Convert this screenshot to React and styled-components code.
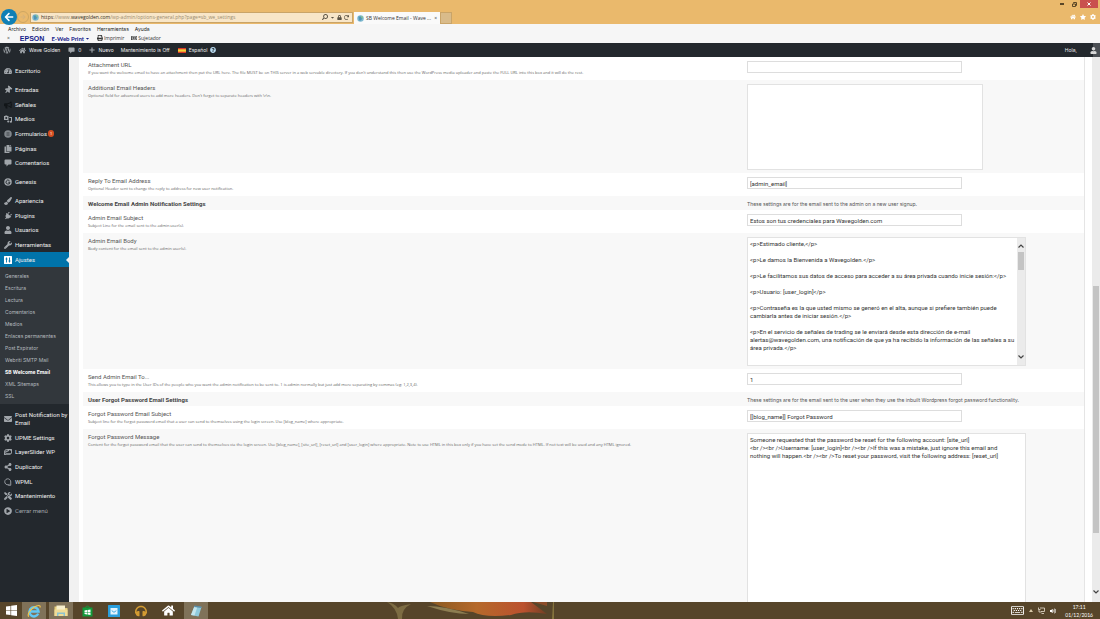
import React from "react";
import styled, { createGlobalStyle } from "styled-components";
import {
  FaWordpress,
  FaHome,
  FaPlus,
  FaThumbtack,
  FaBullhorn,
  FaCopy,
  FaPaintBrush,
  FaPlug,
  FaUser,
  FaWrench,
  FaEnvelope,
  FaCog,
  FaImages,
  FaShareAlt,
  FaTools,
  FaSearch,
  FaLock,
  FaRedo,
  FaStar,
  FaHeadphones,
  FaPrint,
  FaQuestionCircle,
  FaArrowLeft,
  FaArrowRight,
  FaTachometerAlt,
  FaPlayCircle,
  FaVolumeUp,
  FaRegKeyboard,
  FaRegNewspaper,
  FaCaretDown,
} from "react-icons/fa";

const GlobalStyle = createGlobalStyle`
  * {
    box-sizing: border-box;
  }
  body {
    margin: 0;
    font-family: Roboto, "Open Sans", sans-serif;
    background: #f1f1f1;
  }
  button {
    border: 0;
    padding: 0;
    background: none;
    font: inherit;
    color: inherit;
  }
  a {
    color: inherit;
    text-decoration: none;
  }
  svg {
    flex: none;
    display: block;
  }
`;

const Screen = styled.div`
  display: flex;
  flex-direction: column;
  height: 100vh;
  overflow: hidden;
`;

/* browser */
const Chrome = styled.header`
  flex: none;
  background: #eab96c;
`;

const TitleBar = styled.div`
  display: flex;
  justify-content: flex-end;
  align-items: flex-start;
  height: 10px;
  padding-right: 2px;
`;

const WindowButton = styled.button`
  display: flex;
  align-items: center;
  justify-content: center;
  width: ${(props) => (props.$close ? "18px" : "12px")};
  height: 8px;
  color: ${(props) => (props.$close ? "#fff" : "#5b4727")};
  background: ${(props) => (props.$close ? "#c9504e" : "transparent")};
`;

const NavRow = styled.div`
  display: flex;
  align-items: center;
  height: 14px;
  padding: 0 4px 0 1px;
`;

const RoundButton = styled.button`
  display: flex;
  align-items: center;
  justify-content: center;
  width: ${(props) => (props.$big ? "16px" : "12px")};
  height: ${(props) => (props.$big ? "16px" : "12px")};
  border-radius: 50%;
  border: ${(props) => (props.$big ? "0" : "1px solid #cfa762")};
  color: ${(props) => (props.$big ? "#fff" : "#d6b27a")};
  background: ${(props) => (props.$big ? "#0f7fb5" : "transparent")};
`;

const AddressBar = styled.div`
  display: flex;
  align-items: center;
  gap: 2px;
  flex: 0 0 323px;
  height: 11px;
  margin: 0 1px;
  padding: 0 3px 0 1px;
  border: 1px solid #c9a468;
  background: #f8e6c8;
  color: #5b5344;
`;

const Address = styled.div`
  flex: 1;
  font-family: "Open Sans", sans-serif;
  font-size: 5px;
  line-height: 8px;
  color: #9a8b70;
  b {
    color: #2e2a22;
    font-weight: 400;
  }
`;

const Tab = styled.button`
  display: flex;
  align-items: center;
  align-self: flex-end;
  gap: 2px;
  width: 86px;
  height: 12px;
  padding: 0 3px;
  background: #fafafa;
  font-family: "Open Sans", sans-serif;
  font-size: 5px;
  color: #333;
  span {
    flex: 1;
    text-align: left;
  }
`;

const NewTab = styled.button`
  align-self: flex-end;
  width: 12px;
  height: 12px;
  border: 1px solid #c9a468;
  background: #d9bb8a;
`;

const NavIcons = styled.div`
  display: flex;
  gap: 4px;
  margin-left: auto;
  color: #fff;
`;

const MenuBar = styled.nav`
  display: flex;
  align-items: center;
  gap: 6px;
  height: 9px;
  padding-left: 8px;
  background: #f6f6f6;
  font-family: Inter, sans-serif;
  font-size: 5px;
  color: #222;
`;

const ToolBar = styled.div`
  display: flex;
  align-items: center;
  gap: 7px;
  height: 10px;
  padding-left: 7px;
  background: #f6f6f6;
  font-family: "Open Sans", sans-serif;
  font-size: 5px;
  color: #333;
  button {
    display: flex;
    align-items: center;
    gap: 1px;
  }
`;

const Brand = styled.span`
  padding-left: 3px;
  font-family: "Liberation Sans", sans-serif;
  font-size: 7px;
  font-weight: 700;
  color: #14208a;
`;

const WebPrint = styled.button`
  font-family: Lato, sans-serif;
  font-size: 6px;
  font-weight: 700;
  color: #14208a;
`;

/* admin */
const AdminBar = styled.nav`
  display: flex;
  align-items: center;
  flex: none;
  height: 14px;
  padding: 0 0 0 3px;
  background: #23282d;
  font-family: Inter, sans-serif;
  font-size: 5px;
  color: #eee;
`;

const AdminLink = styled.a`
  display: flex;
  align-items: center;
  gap: 3px;
  margin-right: ${(props) => props.$gap || "8px"};
  svg {
    color: #a0a5aa;
  }
`;

const Avatar = styled.button`
  display: flex;
  align-items: center;
  justify-content: center;
  width: 14px;
  height: 14px;
  background: linear-gradient(to right, #23282d 50%, #4b4f54 50%);
  color: #d8d8d8;
`;

const Body = styled.div`
  display: flex;
  flex: 1;
  min-height: 0;
`;

const SideMenu = styled.nav`
  flex: 0 0 69px;
  padding-top: 6px;
  background: #23282d;
  overflow: hidden;
`;

const MenuGroup = styled.div`
  margin-bottom: ${(props) => (props.$open ? "0" : "4px")};
`;

const MenuItem = styled.a`
  display: flex;
  align-items: center;
  gap: 3px;
  height: ${(props) => (props.$tall ? "22px" : "15px")};
  padding-left: 4px;
  white-space: nowrap;
  font-size: 6px;
  line-height: 8px;
  color: ${(props) => (props.$muted ? "#a0a5aa" : "#eee")};
  background: ${(props) => (props.$active ? "#0073aa" : "transparent")};
  svg {
    width: 8px;
    height: 8px;
    color: ${(props) => (props.$active ? "#fff" : "#a0a5aa")};
  }
  &:nth-child(3n) {
    height: 14px;
  }
  &::after {
    content: "";
    display: ${(props) => (props.$active ? "block" : "none")};
    margin-left: auto;
    border: 3px solid transparent;
    border-right-color: #f1f1f1;
  }
`;

const Count = styled.span`
  width: 6px;
  height: 7px;
  margin-left: -2px;
  border-radius: 4px;
  background: #d54e21;
  color: #fff;
  font-size: 4px;
  line-height: 7px;
  text-align: center;
`;

const SubMenu = styled.div`
  display: flex;
  flex-direction: column;
  margin-bottom: 4px;
  padding: 3px 0 2px;
  background: #32373c;
`;

const SubItem = styled.a`
  padding-left: 5px;
  font-family: Inter, sans-serif;
  font-size: 5px;
  line-height: 12px;
  font-weight: ${(props) => (props.$current ? 700 : 400)};
  color: ${(props) => (props.$current ? "#fff" : "#b4b9be")};
`;

const Panel = styled.main`
  flex: 1;
  min-width: 0;
  padding: 0 7px 0 4px;
  margin-left: 10px;
  background: #fff;
`;

const SettingsForm = styled.form`
  height: 100%;
  overflow: hidden;
  border-right: 1px solid #e5e5e5;
`;

const Row = styled.div`
  display: grid;
  grid-template-columns: 659fr 342fr;
  padding: ${(props) => (props.$slim ? "4px 0 2px" : "4px 0 3px")};
  background: #fff;
  &:nth-child(even) {
    background: #f8f8f8;
  }
`;

const Info = styled.div`
  padding-left: 5px;
  color: #555;
`;

const Label = styled.label`
  display: block;
  font-size: 6px;
  line-height: 8px;
`;

const Hint = styled.p`
  margin: 0;
  font-family: "Open Sans", sans-serif;
  font-size: 4px;
  line-height: 8px;
  white-space: nowrap;
  color: #666;
`;

const SectionTitle = styled.h2`
  margin: 0;
  font-size: 6px;
  line-height: 8px;
  font-weight: 700;
  color: #444;
`;

const Value = styled.div`
  display: flex;
  padding-left: 5px;
`;

const Note = styled.p`
  margin: 0;
  font-family: Inter, sans-serif;
  font-size: 5px;
  line-height: 8px;
  white-space: nowrap;
  color: #555;
`;

const TextInput = styled.input`
  width: 215px;
  height: 12px;
  padding: 0 2px;
  border: 1px solid #ddd;
  background: #fff;
  color: #333;
  font-family: Roboto, sans-serif;
  font-size: 6px;
`;

const AreaBox = styled.div`
  display: flex;
  width: ${(props) => (props.$narrow ? "236px" : "279px")};
  height: ${(props) => props.$height};
  border: 1px solid #e2e2e2;
  background: #fff;
`;

const Area = styled.textarea`
  flex: 1;
  min-width: 0;
  padding: 2px;
  border: 0;
  resize: none;
  overflow: hidden;
  white-space: pre;
  background: none;
  color: #333;
  font-family: Roboto, sans-serif;
  font-size: 6px;
  line-height: 8px;
`;

const ScrollTrack = styled.div`
  display: flex;
  flex-direction: column;
  align-items: center;
  flex: 0 0 8px;
  padding: ${(props) => (props.$page ? "0 0 8px" : "6px 0")};
  background: #ebebeb;
  color: #555;
`;

const Spacer = styled.div`
  flex: ${(props) => props.$size};
`;

const ScrollThumb = styled.div`
  flex: ${(props) => props.$size};
  width: 6px;
  background: #c4c4c4;
`;

/* taskbar */
const TaskBar = styled.footer`
  position: relative;
  display: flex;
  align-items: center;
  flex: none;
  height: 17px;
  background: #57452a;
  color: #fff;
`;

const Wallpaper = styled.svg`
  position: absolute;
  left: 35%;
  top: 0;
`;

const TaskButton = styled.button`
  display: flex;
  align-items: center;
  justify-content: center;
  width: ${(props) => (props.$open ? "24px" : "22px")};
  height: 17px;
  margin-right: ${(props) => (props.$open ? "3px" : "5px")};
  background: ${(props) => (props.$open ? "#807259" : "transparent")};
  &:first-of-type {
    margin-right: 0;
  }
`;

const Tray = styled.div`
  display: flex;
  align-items: center;
  gap: 5px;
  margin-left: auto;
  padding-right: 7px;
`;

const Clock = styled.time`
  padding-left: 4px;
  font-family: Lato, sans-serif;
  font-size: 5px;
  line-height: 8px;
  text-align: center;
`;

const Chevron = ({ up }) => (
  <svg width="6" height="4" viewBox="0 0 6 4" fill="none">
    <path
      d={up ? "M0.5 3.5L3 1L5.5 3.5" : "M0.5 0.5L3 3L5.5 0.5"}
      stroke="#444"
      strokeWidth="1.2"
    />
  </svg>
);

const IeIcon = ({ size }) => (
  <svg width={size} height={size} viewBox="0 0 16 16" fill="none">
    <path
      d="M12.8 11A5.2 5.2 0 1 1 13.2 8.6H4"
      stroke="#62c8f4"
      strokeWidth="2.8"
    />
    <path
      d="M2 14.5C0 12.5 3 7 8 3.8C12 1.2 15.5 0.8 15 4"
      stroke="#f3c74b"
      strokeWidth="1.3"
    />
  </svg>
);

const PageIcon = () => (
  <svg width="7" height="7" viewBox="0 0 14 14">
    <circle cx="7" cy="7" r="6.5" fill="#7fb9cf" />
    <path d="M3 3h6l2 3-3 5H4z" fill="#4d94b8" />
    <path d="M7 1l5 3-2 4z" fill="#8cc48f" />
  </svg>
);

const CommentIcon = () => (
  <svg width="7" height="7" viewBox="0 0 16 16" fill="#a0a5aa">
    <path d="M3 1h10q2 0 2 2v6q0 2-2 2H9l-4 4v-4H3q-2 0-2-2V3q0-2 2-2z" />
  </svg>
);

const MediaIcon = () => (
  <svg viewBox="0 0 16 16" fill="#a0a5aa">
    <path d="M0 2h2l1-1h3l1 1h2v8H0z" />
    <circle cx="4.5" cy="6" r="2" fill="#23282d" />
    <path d="M10.5 4H16v9.5a2.2 2.2 0 1 1-2-2.2V6h-3.5z" />
    <circle cx="8.5" cy="13" r="2.2" />
  </svg>
);

const SettingsIcon = () => (
  <svg viewBox="0 0 16 16">
    <rect width="16" height="16" rx="1" fill="#fff" />
    <path
      d="M5 3v10M11 3v10M3 6h4M9 10h4"
      stroke="#0073aa"
      strokeWidth="1.8"
    />
  </svg>
);

const GenesisIcon = () => (
  <svg viewBox="0 0 16 16">
    <circle cx="8" cy="8" r="7.5" fill="#a0a5aa" />
    <path
      d="M11 5.5A4 4 0 1 0 12 8.5H8.5"
      fill="none"
      stroke="#23282d"
      strokeWidth="1.8"
    />
  </svg>
);

const FormsIcon = () => (
  <svg viewBox="0 0 16 16">
    <circle cx="8" cy="8" r="7.5" fill="#80868b" />
    <path d="M5 5.5h6M5 8h6M5 10.5h6" stroke="#3d4348" strokeWidth="1.4" />
  </svg>
);

const WpmlIcon = () => (
  <svg viewBox="0 0 16 16" fill="none" stroke="#a0a5aa" strokeWidth="1.8">
    <path d="M11 12.5A6 6 0 1 1 13.5 8v6.5" />
    <path d="M8.5 14.5h5" />
  </svg>
);

const FlagIcon = () => (
  <svg width="8" height="5" viewBox="0 0 8 5">
    <rect width="8" height="5" fill="#d8382c" />
    <rect y="1.3" width="8" height="2.4" fill="#f6cf35" />
  </svg>
);

const StartIcon = () => (
  <svg width="11" height="11" viewBox="0 0 22 22" fill="#fff">
    <path d="M0 3L9 1.8V10.3H0zM10.3 1.6L22 0V10.3H10.3zM0 11.7H9V20.2L0 19zM10.3 11.7H22V22L10.3 20.4z" />
  </svg>
);

const FolderIcon = () => (
  <svg width="14" height="12" viewBox="0 0 28 24">
    <path d="M1 3h10l2 3h14v16H1z" fill="#e7cf7d" />
    <path d="M5 1h17v9H5z" fill="#f7efcd" />
    <path d="M1 9h26v13H1z" fill="#f0dc97" />
    <path d="M6 15h16v7H6z" fill="#8cc3cf" />
    <path d="M9 18h10v4H9z" fill="#f0dc97" />
  </svg>
);

const StoreIcon = () => (
  <svg width="11" height="12" viewBox="0 0 22 24">
    <path d="M1 5h20v18H1z" fill="#129b3b" />
    <path d="M7 6C7 1 15 1 15 6" fill="none" stroke="#129b3b" strokeWidth="2" />
    <path
      d="M5 11l5-1v4H5zM11 10l6-1v5h-6zM5 15h5v4l-5-1zM11 15h6v5l-6-1z"
      fill="#fff"
    />
  </svg>
);

const MailIcon = () => (
  <svg width="12" height="12" viewBox="0 0 24 24">
    <rect width="24" height="24" rx="1" fill="#2b9fdc" />
    <path d="M5 6h14v13H5z" fill="#e4f4fc" />
    <path d="M8 11c1 4 7 4 8 0" fill="none" stroke="#2b9fdc" strokeWidth="2" />
  </svg>
);

const NotepadIcon = () => (
  <svg width="13" height="12" viewBox="0 0 26 24">
    <path d="M9 2l14 2-6 19-15-3z" fill="#8fcbdd" />
    <path d="M9 2l6 1-6 18-7-1z" fill="#c4e6ee" />
    <path d="M9 1l14 2v3L8 4z" fill="#5b8da5" />
  </svg>
);

const topItems = [
  { text: "Entradas", icon: <FaThumbtack transform="rotate(40)" /> },
  { text: "Señales", icon: <FaBullhorn style={{ color: "#111518" }} /> },
  { text: "Medios", icon: <MediaIcon /> },
  { text: "Formularios", icon: <FormsIcon />, count: 1 },
  { text: "Páginas", icon: <FaCopy /> },
  { text: "Comentarios", icon: <CommentIcon /> },
];

const settingsItems = [
  { text: "Apariencia", icon: <FaPaintBrush /> },
  { text: "Plugins", icon: <FaPlug transform="rotate(40)" /> },
  { text: "Usuarios", icon: <FaUser /> },
  { text: "Herramientas", icon: <FaWrench /> },
  { text: "Ajustes", icon: <SettingsIcon />, active: true },
];

const subItems = [
  "Generales",
  "Escritura",
  "Lectura",
  "Comentarios",
  "Medios",
  "Enlaces permanentes",
  "Post Expirator",
  "Webriti SMTP Mail",
  "SB Welcome Email",
  "XML Sitemaps",
  "SSL",
];

const pluginItems = [
  {
    text: (
      <>
        Post Notification by
        <br />
        Email
      </>
    ),
    icon: <FaEnvelope />,
    tall: true,
  },
  { text: "UPME Settings", icon: <FaCog /> },
  { text: "LayerSlider WP", icon: <FaImages /> },
  { text: "Duplicator", icon: <FaShareAlt /> },
  { text: "WPML", icon: <WpmlIcon /> },
  { text: "Mantenimiento", icon: <FaTools /> },
  { text: "Cerrar menú", icon: <FaPlayCircle />, muted: true },
];

const adminBody = `<p>Estimado cliente,</p>

<p>Le damos la Bienvenida a Wavegolden.</p>

<p>Le facilitamos sus datos de acceso para acceder a su área privada cuando inicie sesión:</p>

<p>Usuario: [user_login]</p>

<p>Contraseña es la que usted mismo se generó en el alta, aunque si prefiere también puede
cambiarla antes de iniciar sesión.</p>

<p>En el servicio de señales de trading se le enviará desde esta dirección de e-mail
alertas@wavegolden.com, una notificación de que ya ha recibido la información de las señales a su
área privada.</p>`;

const forgotMessage = `Someone requested that the password be reset for the following account: [site_url]
<br /><br />Username: [user_login]<br /><br />If this was a mistake, just ignore this email and
nothing will happen.<br /><br />To reset your password, visit the following address: [reset_url]`;

const Group = ({ items, open }) => (
  <MenuGroup $open={open}>
    {items.map((item, i) => (
      <MenuItem
        href="#"
        key={i}
        $active={item.active}
        $tall={item.tall}
        $muted={item.muted}
      >
        {item.icon}
        <span>{item.text}</span>
        {item.count && <Count>{item.count}</Count>}
      </MenuItem>
    ))}
  </MenuGroup>
);

const Field = ({ id, label, hint, children }) => (
  <Row>
    <Info>
      <Label htmlFor={id}>{label}</Label>
      <Hint>{hint}</Hint>
    </Info>
    <Value>{children}</Value>
  </Row>
);

const Section = ({ title, note }) => (
  <Row $slim>
    <Info>
      <SectionTitle>{title}</SectionTitle>
    </Info>
    <Value>
      <Note>{note}</Note>
    </Value>
  </Row>
);

const Browser = () => (
  <Chrome>
    <TitleBar>
      <WindowButton aria-label="Minimizar">
        <svg width="4" height="2">
          <rect width="4" height="2" fill="currentColor" />
        </svg>
      </WindowButton>
      <WindowButton aria-label="Restaurar">
        <svg
          width="5"
          height="5"
          viewBox="0 0 10 10"
          fill="none"
          stroke="currentColor"
          strokeWidth="2"
        >
          <path d="M1 4h6v5H1zM3 3V1h6v6H8" />
        </svg>
      </WindowButton>
      <WindowButton $close aria-label="Cerrar">
        <svg
          width="4"
          height="4"
          viewBox="0 0 8 8"
          stroke="currentColor"
          strokeWidth="2"
        >
          <path d="M1 1l6 6M7 1L1 7" />
        </svg>
      </WindowButton>
    </TitleBar>
    <NavRow>
      <RoundButton $big aria-label="Atrás">
        <FaArrowLeft size={10} />
      </RoundButton>
      <RoundButton aria-label="Adelante">
        <FaArrowRight size={6} />
      </RoundButton>
      <AddressBar>
        <PageIcon />
        <Address>
          <b>https</b>://www.<b>wavegolden.com</b>
          /wp-admin/options-general.php?page=sb_we_settings
        </Address>
        <FaSearch size={6} style={{ transform: "scaleX(-1)" }} />
        <FaCaretDown size={5} />
        <FaLock size={5} />
        <FaRedo size={5} />
      </AddressBar>
      <Tab>
        <PageIcon />
        <span>SB Welcome Email - Wave ...</span>×
      </Tab>
      <NewTab aria-label="Nueva pestaña" />
      <NavIcons>
        <FaHome size={6} />
        <FaStar size={6} />
        <FaCog size={6} />
      </NavIcons>
    </NavRow>
    <MenuBar>
      <span>Archivo</span>
      <span>Edición</span>
      <span>Ver</span>
      <span>Favoritos</span>
      <span>Herramientas</span>
      <span>Ayuda</span>
    </MenuBar>
    <ToolBar>
      <span>×</span>
      <Brand>EPSON</Brand>
      <WebPrint>
        E-Web Print <FaCaretDown size={5} />
      </WebPrint>
      <button>
        <FaPrint size={6} /> Imprimir
      </button>
      <button>
        <FaRegNewspaper size={6} /> Sujetador
      </button>
    </ToolBar>
  </Chrome>
);

const Windows = () => (
  <TaskBar>
    <Wallpaper width="190" height="17" viewBox="0 0 190 17">
      <defs>
        <linearGradient id="flame" x1="0" x2="1">
          <stop offset="0" stopColor="#8a5a22" />
          <stop offset="0.4" stopColor="#b5692b" />
          <stop offset="0.8" stopColor="#bb512e" />
          <stop offset="1" stopColor="#6f3f24" />
        </linearGradient>
      </defs>
      <path
        d="M2 0Q12 6 13 17h4Q16 7 26 2Q14 4 13 6Q9 1 2 0z"
        fill="#7d6c43"
      />
      <path
        d="M45 0H146L162 12Q140 8 126 13Q100 16 88 10Q62 8 45 0z"
        fill="url(#flame)"
      />
      <path d="M42 4Q60 4 84 12Q66 12 42 4z" fill="#8d7d51" />
      <path d="M168 0h1v17h-2z" fill="#85733d" />
      <path d="M148 0h14v4z" fill="#8d4c28" />
    </Wallpaper>
    <TaskButton aria-label="Inicio">
      <StartIcon />
    </TaskButton>
    <TaskButton $open aria-label="Internet Explorer">
      <IeIcon size={14} />
    </TaskButton>
    <TaskButton $open aria-label="Explorador">
      <FolderIcon />
    </TaskButton>
    <TaskButton aria-label="Tienda">
      <StoreIcon />
    </TaskButton>
    <TaskButton aria-label="Correo">
      <MailIcon />
    </TaskButton>
    <TaskButton aria-label="Música">
      <FaHeadphones size={12} color="#d39b32" />
    </TaskButton>
    <TaskButton aria-label="Casa">
      <FaHome size={13} />
    </TaskButton>
    <TaskButton $open aria-label="Bloc de notas">
      <NotepadIcon />
    </TaskButton>
    <Tray>
      <FaRegKeyboard size={13} />
      <svg width="4" height="3" viewBox="0 0 4 3">
        <path d="M0 3L2 0L4 3z" fill="#d8c9a8" />
      </svg>
      <svg
        width="7"
        height="7"
        viewBox="0 0 14 14"
        fill="none"
        stroke="#e8e0d0"
        strokeWidth="1.6"
      >
        <path d="M4 2h9v7H6M1 1v4h4M2 5v5h5M7 13h5" />
      </svg>
      <FaVolumeUp size={6} />
      <Clock>
        17:11
        <br />
        01/12/2016
      </Clock>
    </Tray>
  </TaskBar>
);

const App = () => {
  return (
    <Screen>
      <GlobalStyle />
      <Browser />
      <AdminBar>
        <AdminLink href="#" aria-label="WordPress">
          <FaWordpress size={8} />
        </AdminLink>
        <AdminLink href="#">
          <FaHome size={7} />
          Wave Golden
        </AdminLink>
        <AdminLink href="#">
          <CommentIcon />0
        </AdminLink>
        <AdminLink href="#" $gap="7px">
          <FaPlus size={6} />
          Nuevo
        </AdminLink>
        <AdminLink href="#">Mantenimiento is Off</AdminLink>
        <AdminLink href="#" $gap="auto">
          <FlagIcon />
          Español
          <FaQuestionCircle size={6} style={{ color: "#b9dcf2" }} />
        </AdminLink>
        <AdminLink href="#" $gap="9px">
          Hola,
        </AdminLink>
        <Avatar aria-label="Perfil">
          <FaUser size={7} />
        </Avatar>
      </AdminBar>
      <Body>
        <SideMenu>
          <Group items={[{ text: "Escritorio", icon: <FaTachometerAlt /> }]} />
          <Group items={topItems} />
          <Group items={[{ text: "Genesis", icon: <GenesisIcon /> }]} />
          <Group open items={settingsItems} />
          <SubMenu>
            {subItems.map((item) => (
              <SubItem
                href="#"
                key={item}
                $current={item === "SB Welcome Email"}
              >
                {item}
              </SubItem>
            ))}
          </SubMenu>
          <Group items={pluginItems} />
        </SideMenu>
        <Panel>
          <SettingsForm>
            <Field
              id="attachment"
              label="Attachment URL"
              hint="If you want the welcome email to have an attachment then put the URL here. The file MUST be on THIS server in a web servable directory. If you don't understand this then use the WordPress media uploader and paste the FULL URL into this box and it will do the rest."
            >
              <TextInput id="attachment" />
            </Field>
            <Field
              id="headers"
              label="Additional Email Headers"
              hint="Optional field for advanced users to add more headers. Don't forget to separate headers with \r\n."
            >
              <AreaBox $narrow $height="86px">
                <Area id="headers" />
              </AreaBox>
            </Field>
            <Field
              id="reply"
              label="Reply To Email Address"
              hint="Optional Header sent to change the reply to address for new user notification."
            >
              <TextInput id="reply" defaultValue="[admin_email]" />
            </Field>
            <Section
              title="Welcome Email Admin Notification Settings"
              note="These settings are for the email sent to the admin on a new user signup."
            />
            <Field
              id="subject"
              label="Admin Email Subject"
              hint="Subject Line for the email sent to the admin user(s)."
            >
              <TextInput
                id="subject"
                defaultValue="Estos son tus credenciales para Wavegolden.com"
              />
            </Field>
            <Field
              id="body"
              label="Admin Email Body"
              hint="Body content for the email sent to the admin user(s)."
            >
              <AreaBox $height="129px">
                <Area id="body" defaultValue={adminBody} />
                <ScrollTrack>
                  <Chevron up />
                  <Spacer $size="4" />
                  <ScrollThumb $size="18" />
                  <Spacer $size="83" />
                  <Chevron />
                </ScrollTrack>
              </AreaBox>
            </Field>
            <Field
              id="sendto"
              label="Send Admin Email To..."
              hint="This allows you to type in the User IDs of the people who you want the admin notification to be sent to. 1 is admin normally but just add more separating by commas (eg: 1,2,3,4)."
            >
              <TextInput id="sendto" defaultValue="1" />
            </Field>
            <Section
              title="User Forgot Password Email Settings"
              note="These settings are for the email sent to the user when they use the inbuilt Wordpress forgot password functionality."
            />
            <Field
              id="forgot-subject"
              label="Forgot Password Email Subject"
              hint="Subject line for the forgot password email that a user can send to themselves using the login screen. Use [blog_name] where appropriate."
            >
              <TextInput
                id="forgot-subject"
                defaultValue="[[blog_name]] Forgot Password"
              />
            </Field>
            <Field
              id="forgot-message"
              label="Forgot Password Message"
              hint="Content for the forgot password email that the user can send to themselves via the login screen. Use [blog_name], [site_url], [reset_url] and [user_login] where appropriate. Note to use HTML in this box only if you have set the send mode to HTML. If not text will be used and any HTML ignored."
            >
              <AreaBox $height="214px">
                <Area id="forgot-message" defaultValue={forgotMessage} />
              </AreaBox>
            </Field>
          </SettingsForm>
        </Panel>
        <ScrollTrack $page>
          <Spacer $size="229" />
          <ScrollThumb $size="247" />
          <Spacer $size="57" />
          <Chevron />
        </ScrollTrack>
      </Body>
      <Windows />
    </Screen>
  );
};

export default App;
